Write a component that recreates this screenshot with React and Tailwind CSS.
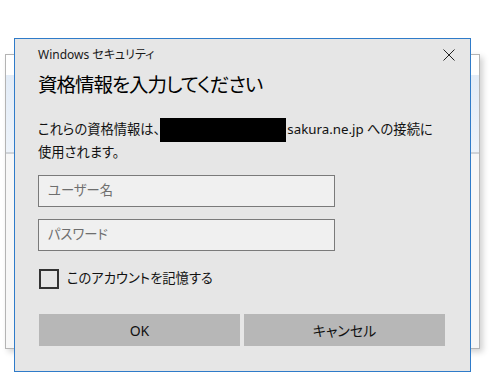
import React from 'react';

const font = "font-['Noto_Sans','Noto_Sans_CJK_JP',sans-serif] [font-feature-settings:'palt']";

const BackWindow = () => (
  <div className="absolute left-[5px] top-[54px] w-[475px] h-[295px] border border-[#b4b4b4] bg-white shadow-[3px_3px_6px_rgba(0,0,0,0.18)] flex flex-col">
    <div className="h-[20px]" />
    <div className="h-[77px] bg-gradient-to-b from-[#e3ecf7] to-[#edf3fa]" />
    <div className="h-[2px] bg-[#cfd3d8]" />
    <div className="flex-1 bg-[#f7f7f7]" />
  </div>
);

const Dialog = () => (
  <div className={`absolute left-[14px] top-[38px] w-[457px] h-[334px] border border-[#2f7bc9] bg-[#e6e6e6] text-[#000] ${font}`}>
    {/* title bar */}
    <div className="h-[32px] flex items-center justify-between pl-[23px] pr-[15px]">
      <span className="text-[12px] text-[#1a1a1a]">Windows セキュリティ</span>
      <svg width="12" height="12" viewBox="0 0 12 12" className="text-[#222]">
        <path d="M0.5 0.5L11.5 11.5M11.5 0.5L0.5 11.5" stroke="currentColor" strokeWidth="1" />
      </svg>
    </div>

    <div className="pl-[23px]">
      <h1 className="text-[19.5px] leading-[28px] tracking-[-1px]">資格情報を入力してください</h1>

      <p className="mt-[19px] text-[13.3px] leading-[21px] text-[#111] w-[420px]">
        これらの資格情報は、<span className="inline-block align-middle w-[126px] h-[24px] bg-black mr-[1px]" />sakura.ne.jp への接続に
        <br />
        使用されます。
      </p>

      <div className="mt-[12px] flex flex-col gap-[12px]">
        <div className="w-[297px] h-[32px] border border-[#7a7a7a] bg-[#f0f0f0] flex items-center px-[9px] text-[13.3px] text-[#6e6e6e]">
          ユーザー名
        </div>
        <div className="w-[297px] h-[32px] border border-[#7a7a7a] bg-[#f0f0f0] flex items-center px-[9px] text-[13.3px] text-[#6e6e6e]">
          パスワード
        </div>
      </div>

      <label className="mt-[18px] flex items-center gap-[8px] text-[13.3px] text-[#111]">
        <span className="w-[20px] h-[20px] border-2 border-[#333] ml-[1px]" />
        このアカウントを記憶する
      </label>

      <div className="mt-[25px] flex gap-[4px] ml-[1px]">
        <button className="w-[201px] h-[32px] bg-[#b7b7b7] text-[14px] text-[#111]">OK</button>
        <button className="w-[201px] h-[32px] bg-[#b7b7b7] text-[14px] text-[#111]">キャンセル</button>
      </div>
    </div>
  </div>
);

export default function App() {
  return (
    <div className="relative w-[497px] h-[385px] bg-white overflow-hidden">
      <BackWindow />
      <Dialog />
    </div>
  );
}
